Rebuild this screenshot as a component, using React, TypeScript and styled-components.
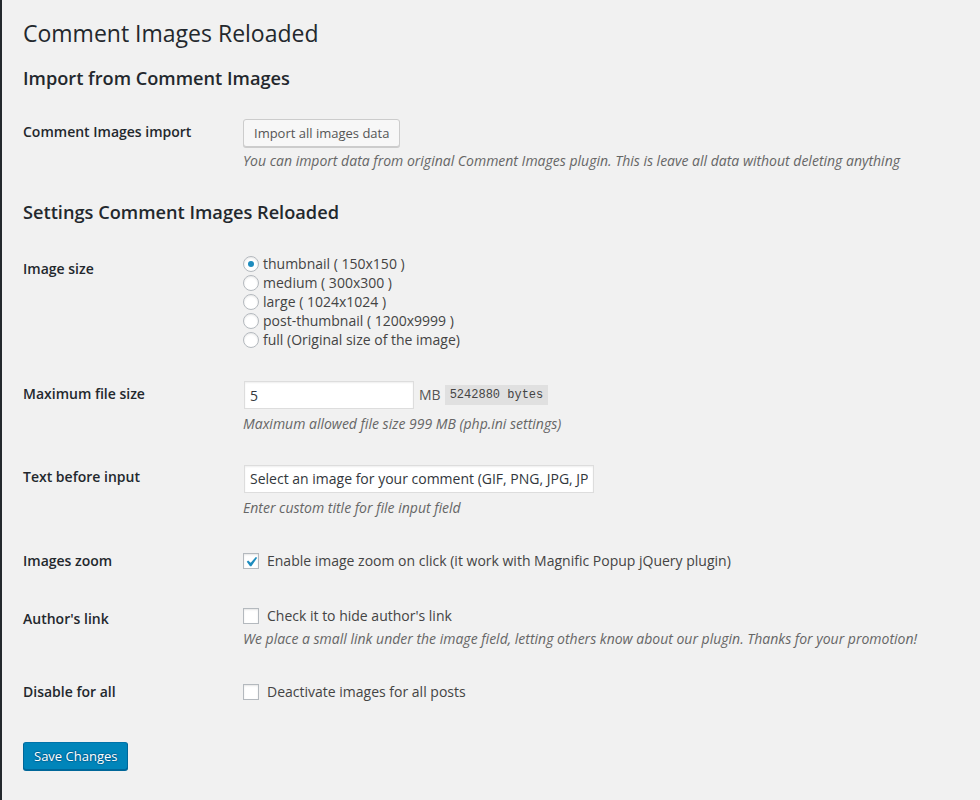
import styled, { createGlobalStyle, css } from "styled-components";

const GlobalStyle = createGlobalStyle`
  html, body {
    margin: 0;
    padding: 0;
    background: #f1f1f1;
  }
  body {
    font-family: "Open Sans", "Liberation Sans", sans-serif;
    font-size: 13px;
    line-height: 1.4em;
    color: #444;
  }
`;

const Page = styled.div`
  min-height: 800px;
  box-sizing: border-box;
  border-left: 2px solid #23282d;
  padding: 10px 20px 0 21px;
`;

const Title = styled.h1`
  margin: 0;
  padding: 9px 0 3px;
  font-size: 23px;
  font-weight: 400;
  line-height: 29px;
  color: #23282d;
`;

const SectionTitle = styled.h2<{ $below: number }>`
  margin: 18px 0 ${(p) => p.$below}px;
  font-size: 18.2px;
  line-height: 18.2px;
  font-weight: 600;
  color: #23282d;
`;

const FormTable = styled.table`
  border-collapse: collapse;
  width: 100%;
  font-size: 14px;
`;

const Th = styled.th`
  width: 200px;
  padding: 20px 10px 20px 0;
  text-align: left;
  vertical-align: top;
  line-height: 1.3;
  font-weight: 600;
  color: #23282d;
`;

const Td = styled.td`
  padding: 15px 10px;
  line-height: 1.3;
  vertical-align: middle;
`;

const ControlLine = styled.div<{ $height: number }>`
  display: flex;
  align-items: center;
  height: ${(p) => p.$height}px;
`;

const Description = styled.p`
  margin: 4px 0 0;
  font-style: italic;
  color: #666;
`;

const Button = styled.button<{ $primary?: boolean }>`
  height: 28px;
  box-sizing: border-box;
  margin: 0;
  padding: 0 10px 1px;
  border: 1px solid;
  border-radius: 3px;
  font-family: "Open Sans", "Liberation Sans", sans-serif;
  font-size: 13px;
  line-height: 26px;
  white-space: nowrap;
  cursor: pointer;
  ${(p) =>
    p.$primary
      ? css`
          background: #0085ba;
          border-color: #0073aa #006799 #006799;
          color: #fff;
          box-shadow: 0 1px 0 #006799;
          text-shadow: 0 -1px 1px #006799, 1px 0 1px #006799,
            0 1px 1px #006799, -1px 0 1px #006799;
        `
      : css`
          background: #f7f7f7;
          border-color: #ccc;
          color: #555;
          box-shadow: 0 1px 0 #ccc;
        `}
`;

const TextInput = styled.input<{ $width: number }>`
  width: ${(p) => p.$width}px;
  height: 28px;
  box-sizing: border-box;
  margin: 1px 0 1px 1px;
  padding: 0 5px;
  border: 1px solid #ddd;
  box-shadow: inset 0 1px 2px rgba(0, 0, 0, 0.07);
  background: #fff;
  color: #32373c;
  font-family: "Open Sans", "Liberation Sans", sans-serif;
  font-size: 14px;
  outline: none;
`;

const Unit = styled.span`
  margin-left: 5px;
  color: #555;
`;

const Code = styled.code`
  margin-left: 4px;
  padding: 3px 5px 2px;
  background: rgba(0, 0, 0, 0.07);
  font-family: "Liberation Mono", "DejaVu Sans Mono", monospace;
  font-size: 12px;
  line-height: 15px;
  color: #444;
`;

const RadioLabel = styled.label`
  display: flex;
  align-items: center;
  gap: 4px;
  height: 19px;
  color: #444;
`;

const RadioDot = styled.span<{ $checked?: boolean }>`
  display: flex;
  align-items: center;
  justify-content: center;
  width: 16px;
  height: 16px;
  box-sizing: border-box;
  border: 1px solid #b4b9be;
  border-radius: 50%;
  background: #fff;
  box-shadow: inset 0 1px 2px rgba(0, 0, 0, 0.1);
  &::before {
    content: "";
    display: ${(p) => (p.$checked ? "block" : "none")};
    width: 6px;
    height: 6px;
    border-radius: 50%;
    background: #1e8cbe;
  }
`;

const CheckLabel = styled.label`
  display: flex;
  align-items: center;
  gap: 8px;
  height: 21px;
  color: #444;
`;

const CheckBoxFrame = styled.span`
  position: relative;
  flex: none;
  width: 16px;
  height: 16px;
  box-sizing: border-box;
  border: 1px solid #b4b9be;
  background: #fff;
  box-shadow: inset 0 1px 2px rgba(0, 0, 0, 0.1);
`;

const CheckMark = styled.svg`
  position: absolute;
  left: -3px;
  top: -2px;
  width: 20px;
  height: 20px;
`;

const Submit = styled.p`
  margin: 20px 0 0;
  padding: 0;
`;

const CheckBox = ({ checked }: { checked?: boolean }) => (
  <CheckBoxFrame>
    {checked && (
      <CheckMark viewBox="0 0 20 20">
        <path
          fill="#1e8cbe"
          d="M14.83 4.89l1.34.94-5.81 8.38H9.02L5.78 9.67l1.34-1.25 2.57 2.4z"
        />
      </CheckMark>
    )}
  </CheckBoxFrame>
);

const sizes = [
  "thumbnail ( 150x150 )",
  "medium ( 300x300 )",
  "large ( 1024x1024 )",
  "post-thumbnail ( 1200x9999 )",
  "full (Original size of the image)",
];

export default function App() {
  return (
    <>
      <GlobalStyle />
      <Page>
        <Title>Comment Images Reloaded</Title>

        <SectionTitle $below={16}>Import from Comment Images</SectionTitle>
        <FormTable>
          <tbody>
            <tr>
              <Th>Comment Images import</Th>
              <Td>
                <ControlLine $height={30}>
                  <Button type="button">Import all images data</Button>
                </ControlLine>
                <Description>
                  You can import data from original Comment Images plugin. This
                  is leave all data without deleting anything
                </Description>
              </Td>
            </tr>
          </tbody>
        </FormTable>

        <SectionTitle $below={18}>Settings Comment Images Reloaded</SectionTitle>
        <FormTable>
          <tbody>
            <tr>
              <Th>Image size</Th>
              <Td>
                {sizes.map((s, i) => (
                  <RadioLabel key={s}>
                    <RadioDot $checked={i === 0} />
                    {s}
                  </RadioLabel>
                ))}
              </Td>
            </tr>
            <tr>
              <Th>Maximum file size</Th>
              <Td>
                <ControlLine $height={31}>
                  <TextInput $width={170} defaultValue="5" />
                  <Unit>MB</Unit>
                  <Code>5242880 bytes</Code>
                </ControlLine>
                <Description>
                  Maximum allowed file size 999 MB (php.ini settings)
                </Description>
              </Td>
            </tr>
            <tr>
              <Th>Text before input</Th>
              <Td>
                <ControlLine $height={32}>
                  <TextInput
                    $width={350}
                    defaultValue="Select an image for your comment (GIF, PNG, JPG, JPEG):"
                  />
                </ControlLine>
                <Description>Enter custom title for file input field</Description>
              </Td>
            </tr>
            <tr>
              <Th>Images zoom</Th>
              <Td>
                <CheckLabel>
                  <CheckBox checked />
                  Enable image zoom on click (it work with Magnific Popup jQuery
                  plugin)
                </CheckLabel>
              </Td>
            </tr>
            <tr>
              <Th>Author's link</Th>
              <Td>
                <CheckLabel>
                  <CheckBox />
                  Check it to hide author's link
                </CheckLabel>
                <Description>
                  We place a small link under the image field, letting others
                  know about our plugin. Thanks for your promotion!
                </Description>
              </Td>
            </tr>
            <tr>
              <Th>Disable for all</Th>
              <Td>
                <CheckLabel>
                  <CheckBox />
                  Deactivate images for all posts
                </CheckLabel>
              </Td>
            </tr>
          </tbody>
        </FormTable>

        <Submit>
          <Button type="button" $primary>
            Save Changes
          </Button>
        </Submit>
      </Page>
    </>
  );
}
